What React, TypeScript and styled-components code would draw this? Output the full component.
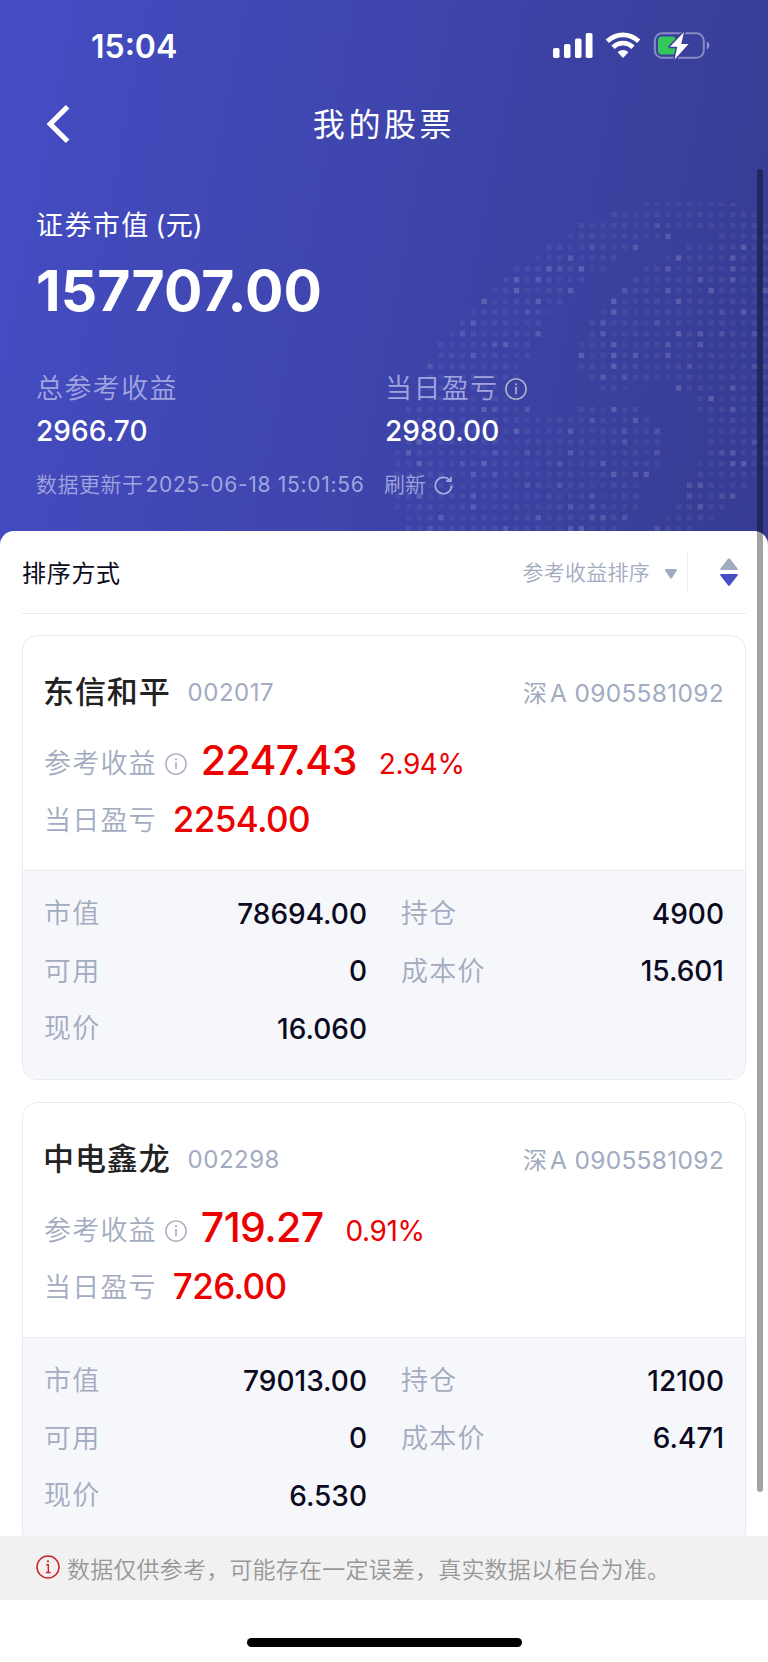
import React from "react";
import styled, { createGlobalStyle } from "styled-components";

const GlobalStyle = createGlobalStyle`
  * { box-sizing: border-box; }
  body { margin: 0; background: #fff; font-family: Inter, "Noto Sans CJK SC", sans-serif; }
`;

const Screen = styled.div`
  position: relative;
  width: 768px;
  height: 1662px;
  overflow: hidden;
  display: flex;
  flex-direction: column;
  background: #fff;
`;

const Hero = styled.header`
  position: relative;
  flex: none;
  height: 546px;
  color: #fff;
  background: linear-gradient(101deg, #444dc4 0%, #3e45ac 48%, #363c92 100%);
`;

const DotMap = styled.svg`
  position: absolute;
  left: 0;
  top: 0;
  pointer-events: none;
`;

const StatusBar = styled.div`
  display: flex;
  justify-content: space-between;
  align-items: center;
  height: 92px;
  padding: 0 57px 0 91px;
`;

const Clock = styled.span`
  margin-top: 1px;
  font-size: 32px;
  font-weight: 600;
  line-height: 40px;
`;

const NavBar = styled.nav`
  display: grid;
  grid-template-columns: 120px 1fr 120px;
  align-items: center;
  height: 64px;
`;

const Title = styled.h1`
  margin: 2px 0 0;
  text-align: center;
  font-size: 32px;
  font-weight: 400;
  letter-spacing: 3.6px;
  line-height: 48px;
`;

const BackButton = styled.div`
  display: flex;
  padding-left: 46px;
`;

const Summary = styled.section`
  position: relative;
  padding: 49px 36px 0;
`;

const Caption = styled.div`
  font-size: 27px;
  line-height: 42px;
  letter-spacing: 1.4px;
`;

const Unit = styled.span`
  margin-left: 6px;
  letter-spacing: 0.2px;
`;

const Total = styled.div`
  margin-top: 7px;
  font-size: 57px;
  font-weight: 700;
  line-height: 74px;
  letter-spacing: 0.1px;
`;

const Figures = styled.div`
  display: grid;
  grid-template-columns: 349px 1fr;
  margin-top: 39px;
`;

const FigureLabel = styled.div`
  display: flex;
  align-items: center;
  gap: 6px;
  padding-top: 1px;
  height: 42px;
  font-size: 27px;
  font-weight: 350;
  line-height: 42px;
  letter-spacing: 1.4px;
  color: #a1a5df;
`;

const FigureValue = styled.div`
  font-size: 28px;
  font-weight: 500;
  line-height: 44px;
  letter-spacing: 0.1px;
`;

const Updated = styled.div`
  display: grid;
  grid-template-columns: 348px auto auto;
  justify-content: start;
  align-items: center;
  margin-top: 16px;
  font-size: 21px;
  font-weight: 350;
  line-height: 32px;
  color: #a1a5df;
`;

const Stamp = styled.span`
  letter-spacing: 0.5px;
`;

const StampTime = styled.span`
  margin-left: 2px;
  font-weight: 400;
  letter-spacing: 0.7px;
`;

const Sheet = styled.main`
  position: relative;
  flex: none;
  height: 1005px;
  margin-top: -15px;
  padding: 0 22px;
  overflow: hidden;
  background: #fff;
  border-radius: 14px 14px 0 0;
`;

const SortBar = styled.div`
  display: flex;
  align-items: center;
  height: 83px;
  margin-bottom: 21px;
  border-bottom: 1px solid #e8eaf2;
`;

const SortTitle = styled.span`
  flex: 1;
  margin-top: 3px;
  font-size: 24px;
  line-height: 40px;
  letter-spacing: 0.7px;
  color: #0b0a20;
`;

const SortBy = styled.span`
  display: flex;
  align-items: center;
  height: 40px;
  padding-right: 10px;
  border-right: 1px solid #edeff4;
  font-size: 21px;
  font-weight: 350;
  line-height: 40px;
  letter-spacing: 0.25px;
  color: #a2abbf;
`;

const SortField = styled.span`
  margin-top: 2px;
`;

const Caret = styled.svg`
  margin: 3px 0 0 15px;
`;

const SortArrows = styled.svg`
  margin: 0 8px 0 32px;
`;

const Card = styled.article`
  margin-bottom: 22px;
  border: 1px solid #e8eaf2;
  border-radius: 15px;
  overflow: hidden;
`;

const CardTop = styled.div`
  height: 234px;
  padding: 32px 21px 0;
`;

const NameRow = styled.div`
  display: flex;
  align-items: center;
  height: 50px;
  color: #a2abbf;
  font-size: 24px;
  line-height: 40px;
`;

const StockName = styled.h2`
  margin: 0 17px 3px -1px;
  font-size: 31px;
  font-weight: 500;
  line-height: 40px;
  letter-spacing: 0.9px;
  color: #222;
`;

const Code = styled.span`
  flex: 1;
  letter-spacing: 0.5px;
`;

const Account = styled.span`
  font-size: 24px;
`;

const AccountNo = styled.span`
  margin-left: 3px;
  font-size: 24.5px;
  letter-spacing: 0.3px;
`;

const ProfitRow = styled.div<{ $top: number }>`
  display: flex;
  align-items: center;
  height: 58px;
  margin-top: ${(p) => p.$top}px;
`;

const Label = styled.span<{ $drop?: number }>`
  margin-top: ${(p) => p.$drop ?? 1}px;
  font-size: 27px;
  font-weight: 350;
  letter-spacing: 1.2px;
  line-height: 40px;
  color: #a2abbf;
`;

const Gain = styled.span<{ $size: number; $gap: number }>`
  margin-left: ${(p) => p.$gap}px;
  font-size: ${(p) => p.$size}px;
  font-weight: 500;
  line-height: 46px;
  letter-spacing: -0.6px;
  color: #ec0000;
`;

const Percent = styled.span`
  margin: 8px 0 0 22px;
  font-size: 28px;
  line-height: 40px;
  letter-spacing: -0.4px;
  color: #ec0000;
`;

const Details = styled.div`
  display: grid;
  grid-template-columns: 323px 323px;
  column-gap: 34px;
  height: 209px;
  padding: 14px 21px 0;
  grid-auto-rows: 57.5px;
  background: #f5f7fb;
  border-top: 1px solid #e8eaf0;
`;

const Detail = styled.div`
  display: flex;
  align-items: center;
  justify-content: space-between;
`;

const DetailValue = styled.span`
  font-size: 28px;
  font-weight: 500;
  line-height: 40px;
  color: #0b0a20;
`;

const Notice = styled.footer`
  display: flex;
  flex: none;
  align-items: center;
  gap: 7px;
  height: 64px;
  padding-left: 36px;
  background: #f1f1f1;
  color: #979797;
`;

const NoticeText = styled.span`
  margin-top: 4px;
  font-size: 23px;
  font-weight: 350;
  line-height: 40px;
  letter-spacing: 0.2px;
`;

const NoticeIcon = styled.svg`
  margin-bottom: 3px;
`;

const HomeArea = styled.div`
  display: flex;
  flex: 1;
  justify-content: center;
  align-items: flex-start;
  padding-top: 38px;
`;

const HomeBar = styled.div`
  width: 275px;
  height: 9px;
  border-radius: 5px;
  background: #000;
`;

const ScrollThumb = styled.div`
  position: absolute;
  left: 757px;
  top: 169px;
  width: 6px;
  height: 1323px;
  border-radius: 3px;
  background: rgba(0, 0, 0, 0.36);
`;

/* Each row lists its [first, last] column runs, then the brighter columns. */
const dotRows: [number[][], number[]][] = [
  [[[23, 31]], []],
  [[[20, 33]], []],
  [[[17, 34]], [24]],
  [[[16, 25], [30, 34]], [25]],
  [[[14, 22], [27, 34]], [18, 22, 32]],
  [[[13, 20], [25, 34]], [16, 26, 31]],
  [[[11, 19], [23, 34]], [14, 15, 17, 25, 31]],
  [[[10, 17], [22, 34]], [11, 13, 28, 31]],
  [[[9, 16], [21, 34]], [11, 16, 21, 25, 29, 34]],
  [[[8, 15], [20, 34]], [8, 13, 20, 26]],
  [[[7, 14], [19, 34]], [12, 20, 30, 32]],
  [[[6, 13], [18, 34]], [7, 19, 24]],
  [[[5, 13], [18, 34]], [6, 13, 19, 26, 28, 30, 33]],
  [[[4, 12], [17, 34]], [9, 10, 20, 25, 28]],
  [[[4, 12], [17, 34]], [7, 17, 20, 22, 25]],
  [[[3, 11], [17, 34]], [3, 20, 27, 33]],
  [[[3, 11], [18, 34]], [19, 21]],
  [[[2, 11], [19, 21], [26, 34]], [26, 31]],
  [[[2, 11], [28, 34]], [29]],
  [[[1, 12], [17, 22], [28, 34]], [8, 9, 12, 20, 31]],
  [[[1, 23], [29, 34]], [18, 22]],
  [[[1, 24], [29, 34]], [11, 16, 21, 24]],
  [[[1, 24], [29, 34]], [2, 21, 33]],
  [[[0, 24], [29, 34]], [1, 9, 12, 16, 24, 30, 31]],
  [[[0, 24], [28, 34]], [2, 6, 8, 15, 19, 31, 32]],
  [[[0, 23], [28, 33]], [7, 9, 20, 22, 23]],
  [[[0, 22], [27, 32]], [12, 15, 27, 28]],
  [[[0, 22], [27, 31]], [2, 7, 18, 27, 30, 31]],
  [[[0, 22], [26, 30]], [7, 16, 18, 28]],
  [[[1, 21], [25, 29]], [4, 13, 18, 19, 21]],
  [[[1, 20], [24, 27]], [3, 10, 16, 17, 24]],
];

function Dots() {
  const cells: React.ReactNode[] = [];
  dotRows.forEach(([runs, bright], r) => {
    runs.forEach(([a, b]) => {
      for (let c = a; c <= b; c++) {
        const top = r === 0;
        const hot = bright.includes(c);
        const shade = hot ? 0.12 + ((c * 7 + r * 3) % 3) * 0.025 : 0.04 + ((c * 5 + r * 11) % 4) * 0.009;
        cells.push(
          <rect
            key={`${r}-${c}`}
            x={395 + c * 10.81}
            y={201.3 + r * 10.82 + (top ? 1.5 : 0)}
            width={5.3}
            height={top ? 3.5 : 5.3}
            fill="#fff"
            fillOpacity={shade}
          />
        );
      }
    });
  });
  return (
    <DotMap width="768" height="546" viewBox="0 0 768 546">
      {cells}
    </DotMap>
  );
}

const IconBox = styled.svg<{ $ml: number; $mt: number }>`
  flex: none;
  margin: ${(p) => p.$mt}px 0 0 ${(p) => p.$ml}px;
`;

function InfoIcon({ color, ml = 0, mt = 0 }: { color: string; ml?: number; mt?: number }) {
  return (
    <IconBox width={22} height={22} viewBox="0 0 22 22" fill="none" $ml={ml} $mt={mt}>
      <circle cx="11" cy="11" r="10.1" stroke={color} strokeWidth="1.4" />
      <path d="M11 9V16.2" stroke={color} strokeWidth="1.5" />
      <circle cx="11" cy="6.3" r="1" fill={color} />
    </IconBox>
  );
}

const StatusIcons = () => (
  <svg width="158" height="28" viewBox="0 0 158 28" fill="none">
    <g fill="#fff">
      <rect x="0" y="16" width="6.5" height="10" rx="1.8" />
      <rect x="11" y="12" width="6.5" height="14" rx="1.8" />
      <rect x="22" y="6.5" width="6.5" height="19.5" rx="1.8" />
      <rect x="32.7" y="1" width="6.8" height="25" rx="1.8" />
    </g>
    <g stroke="#fff" fill="none" strokeWidth="4.8">
      <path d="M54.3 9.2C63.5 0.8 76.5 0.8 85.7 9.2" />
      <path d="M60 15.2C65.8 9.8 74.2 9.8 80 15.2" />
    </g>
    <path d="M64.6 20.2C67.6 17.3 72.4 17.3 75.4 20.2L70 26Z" fill="#fff" />
    <rect x="101.8" y="1.2" width="49" height="24.6" rx="7.5" stroke="#fff" strokeOpacity=".4" strokeWidth="2" />
    <path d="M153.8 9.5C157.2 11 157.2 16 153.8 17.5Z" fill="#fff" fillOpacity=".45" />
    <rect x="105" y="4.6" width="18" height="17.8" rx="4" fill="#34c759" />
    <path d="M131 0L117 14.8H124.3L121.6 27.5L135.5 12H128.2Z" fill="#fff" stroke="#3b41a1" strokeWidth="3" strokeLinejoin="round" paintOrder="stroke" />
  </svg>
);

const stocks = [
  { name: "东信和平", code: "002017", profit: "2247.43", pct: "2.94%", day: "2254.00", value: "78694.00", hold: "4900", cost: "15.601", price: "16.060" },
  { name: "中电鑫龙", code: "002298", profit: "719.27", pct: "0.91%", day: "726.00", value: "79013.00", hold: "12100", cost: "6.471", price: "6.530" },
];

export default function App() {
  return (
    <Screen>
      <GlobalStyle />
      <Hero>
        <Dots />
        <StatusBar>
          <Clock>15:04</Clock>
          <StatusIcons />
        </StatusBar>
        <NavBar>
          <BackButton>
            <svg width="26" height="40" viewBox="0 0 26 40" fill="none">
              <path d="M21.6 2.8L4.2 20L21.6 37.2" stroke="#fff" strokeWidth="5.1" />
            </svg>
          </BackButton>
          <Title>我的股票</Title>
        </NavBar>
        <Summary>
          <Caption>证券市值<Unit>(元)</Unit></Caption>
          <Total>157707.00</Total>
          <Figures>
            <div>
              <FigureLabel>总参考收益</FigureLabel>
              <FigureValue>2966.70</FigureValue>
            </div>
            <div>
              <FigureLabel>
                当日盈亏
                <InfoIcon color="#b9bec9" />
              </FigureLabel>
              <FigureValue>2980.00</FigureValue>
            </div>
          </Figures>
          <Updated>
            <Stamp>数据更新于<StampTime>2025-06-18 15:01:56</StampTime></Stamp>
            <span>刷新</span>
            <IconBox width="19" height="19" viewBox="0 0 20 20" fill="none" $ml={8} $mt={0}>
              <path d="M18.6 10A8.6 8.6 0 1 1 16.4 4.3" stroke="#a9ade2" strokeWidth="1.8" />
              <path d="M17.8 1V5.4H13" stroke="#a9ade2" strokeWidth="1.8" />
            </IconBox>
          </Updated>
        </Summary>
      </Hero>
      <Sheet>
        <SortBar>
          <SortTitle>排序方式</SortTitle>
          <SortBy>
            <SortField>参考收益排序</SortField>
            <Caret width="12" height="10" viewBox="0 0 12 10">
              <path d="M1 0H11Q12.4 .4 11.7 1.8L7 9Q6 10.4 5 9L.3 1.8Q-.4 .4 1 0Z" fill="#a2abbf" />
            </Caret>
          </SortBy>
          <SortArrows width="18" height="28" viewBox="0 0 18 28">
            <path d="M8 .8Q9 -.4 10 .8L17.6 10.5Q18.2 12 16.8 12H1.2Q-.2 12 .4 10.5Z" fill="#a2abbf" />
            <path d="M8 27.2Q9 28.4 10 27.2L17.6 17.5Q18.2 16 16.8 16H1.2Q-.2 16 .4 17.5Z" fill="#464ec5" />
          </SortArrows>
        </SortBar>
        {stocks.map((s) => (
          <Card key={s.code}>
            <CardTop>
              <NameRow>
                <StockName>{s.name}</StockName>
                <Code>{s.code}</Code>
                <Account>深<AccountNo>A 0905581092</AccountNo></Account>
              </NameRow>
              <ProfitRow $top={13}>
                <Label $drop={7}>参考收益</Label>
                <InfoIcon color="#a2abbf" ml={8} mt={8} />
                <Gain $size={41} $gap={14}>{s.profit}</Gain>
                <Percent>{s.pct}</Percent>
              </ProfitRow>
              <ProfitRow $top={1}>
                <Label $drop={3}>当日盈亏</Label>
                <Gain $size={35} $gap={16}>{s.day}</Gain>
              </ProfitRow>
            </CardTop>
            <Details>
              <Detail><Label>市值</Label><DetailValue>{s.value}</DetailValue></Detail>
              <Detail><Label>持仓</Label><DetailValue>{s.hold}</DetailValue></Detail>
              <Detail><Label>可用</Label><DetailValue>0</DetailValue></Detail>
              <Detail><Label>成本价</Label><DetailValue>{s.cost}</DetailValue></Detail>
              <Detail><Label>现价</Label><DetailValue>{s.price}</DetailValue></Detail>
            </Details>
          </Card>
        ))}
      </Sheet>
      <Notice>
        <NoticeIcon width="24" height="24" viewBox="0 0 24 24" fill="none">
          <circle cx="12" cy="12" r="11" stroke="#cf2430" strokeWidth="1.5" />
          <path d="M10.2 9.8H12.3V17.4M9.9 17.5H14.6" stroke="#cf2430" strokeWidth="1.4" />
          <circle cx="12" cy="6.4" r="1.1" fill="#cf2430" />
        </NoticeIcon>
        <NoticeText>数据仅供参考，可能存在一定误差，真实数据以柜台为准。</NoticeText>
      </Notice>
      <HomeArea>
        <HomeBar />
      </HomeArea>
      <ScrollThumb />
    </Screen>
  );
}
